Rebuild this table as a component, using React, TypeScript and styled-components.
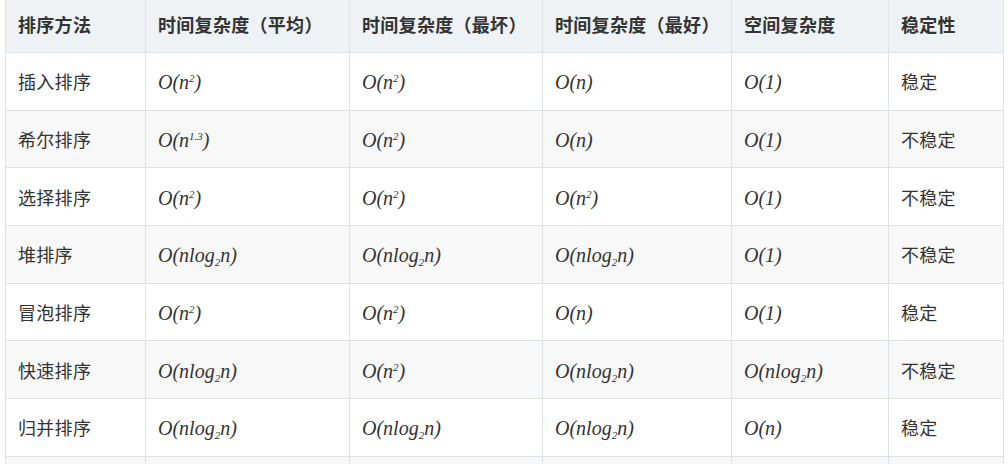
import React from 'react';
import styled, { createGlobalStyle } from 'styled-components';

const GlobalStyle = createGlobalStyle`
  html, body {
    margin: 0;
    padding: 0;
    background: #ffffff;
  }
  body {
    font-family: "Noto Sans CJK SC", "Noto Sans", sans-serif;
    color: #333333;
  }
`;

const Wrapper = styled.div`
  padding: 0 5px;
  width: 998px;
`;

const Table = styled.table`
  width: 998px;
  border-collapse: collapse;
  table-layout: fixed;
  font-size: 18px;
`;

const HeadCell = styled.th`
  height: 47px;
  padding: 0 12px 5px;
  text-align: left;
  font-weight: bold;
  background-color: #eef2f5;
  border: 1px solid #dfe2e5;
  border-top: none;
  letter-spacing: 0.3px;
`;

const Row = styled.tr<{ $striped: boolean }>`
  background-color: ${(p) => (p.$striped ? '#f8f8f8' : '#ffffff')};
`;

const Cell = styled.td`
  height: 56.7px;
  padding: 0 12px;
  border: 1px solid #dfe2e5;
  letter-spacing: 0.3px;
`;

const Math = styled.span`
  font-family: "Liberation Serif", "Times New Roman", serif;
  font-style: italic;
  font-size: 20px;
  letter-spacing: 0;
  color: #333333;

  sup {
    font-size: 11px;
    vertical-align: 7px;
    line-height: 0;
  }

  sub {
    font-size: 11px;
    vertical-align: -4px;
    line-height: 0;
  }
`;

const widths = [140, 204, 193, 189, 157, 115];

const headers = ['排序方法', '时间复杂度（平均）', '时间复杂度（最坏）', '时间复杂度（最好）', '空间复杂度', '稳定性'];

type Cx = 'n2' | 'n' | '1' | 'nlogn' | 'n13';

const rows: { name: string; avg: Cx; worst: Cx; best: Cx; space: Cx; stable: string }[] = [
  { name: '插入排序', avg: 'n2', worst: 'n2', best: 'n', space: '1', stable: '稳定' },
  { name: '希尔排序', avg: 'n13', worst: 'n2', best: 'n', space: '1', stable: '不稳定' },
  { name: '选择排序', avg: 'n2', worst: 'n2', best: 'n2', space: '1', stable: '不稳定' },
  { name: '堆排序', avg: 'nlogn', worst: 'nlogn', best: 'nlogn', space: '1', stable: '不稳定' },
  { name: '冒泡排序', avg: 'n2', worst: 'n2', best: 'n', space: '1', stable: '稳定' },
  { name: '快速排序', avg: 'nlogn', worst: 'n2', best: 'nlogn', space: 'nlogn', stable: '不稳定' },
  { name: '归并排序', avg: 'nlogn', worst: 'nlogn', best: 'nlogn', space: 'n', stable: '稳定' },
];

const Complexity = ({ value }: { value: Cx }) => {
  switch (value) {
    case 'n2':
      return <Math>O(n<sup>2</sup>)</Math>;
    case 'n13':
      return <Math>O(n<sup>1.3</sup>)</Math>;
    case 'n':
      return <Math>O(n)</Math>;
    case '1':
      return <Math>O(1)</Math>;
    default:
      return <Math>O(nlog<sub>2</sub>n)</Math>;
  }
};

const App = () => {
  return (
    <Wrapper>
      <GlobalStyle />
      <Table>
        <colgroup>
          {widths.map((w, i) => (
            <col key={i} style={{ width: w }} />
          ))}
        </colgroup>
        <thead>
          <tr>
            {headers.map((h) => (
              <HeadCell key={h}>{h}</HeadCell>
            ))}
          </tr>
        </thead>
        <tbody>
          {rows.map((r, idx) => (
            <Row key={r.name} $striped={idx % 2 === 1}>
              <Cell>{r.name}</Cell>
              <Cell><Complexity value={r.avg} /></Cell>
              <Cell><Complexity value={r.worst} /></Cell>
              <Cell><Complexity value={r.best} /></Cell>
              <Cell><Complexity value={r.space} /></Cell>
              <Cell>{r.stable}</Cell>
            </Row>
          ))}
          <Row $striped>
            {widths.map((w) => (
              <Cell key={w} />
            ))}
          </Row>
        </tbody>
      </Table>
    </Wrapper>
  );
};

export default App;
